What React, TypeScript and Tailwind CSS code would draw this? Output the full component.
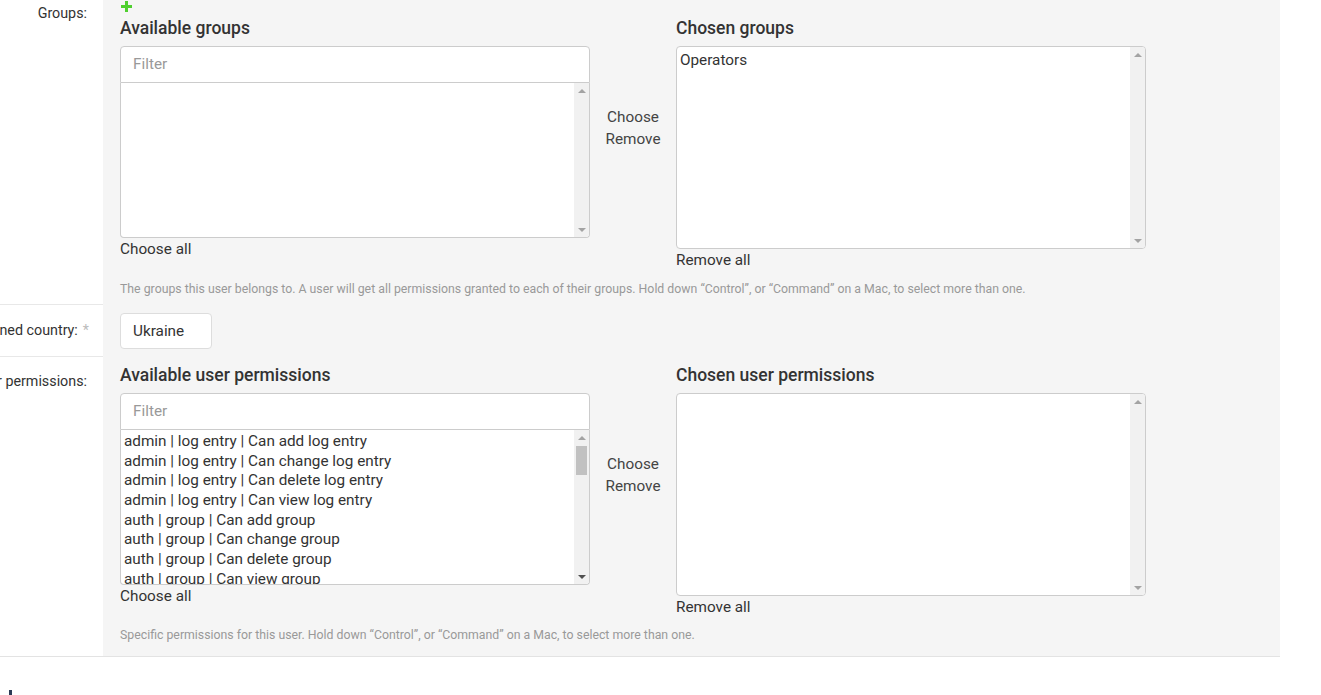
import React from "react";

function Up({ dark }: { dark?: boolean }) {
  return (
    <div className="flex h-[15px] w-full items-center justify-center">
      <div
        className={
          "h-0 w-0 border-x-[4px] border-b-[4px] border-x-transparent " +
          (dark ? "border-b-[#505050]" : "border-b-[#a3a3a3]")
        }
      />
    </div>
  );
}

function Down({ dark }: { dark?: boolean }) {
  return (
    <div className="flex h-[15px] w-full items-center justify-center">
      <div
        className={
          "h-0 w-0 border-x-[4px] border-t-[4px] border-x-transparent " +
          (dark ? "border-t-[#505050]" : "border-t-[#a3a3a3]")
        }
      />
    </div>
  );
}

function Scrollbar({ thumb }: { thumb?: boolean }) {
  return (
    <div className="flex w-[15px] shrink-0 flex-col bg-[#f1f1f1]">
      <Up />
      {thumb ? (
        <div className="ml-[2px] mt-[1px] h-[29px] w-[11px] bg-[#c1c1c1]" />
      ) : null}
      <div className="flex-1" />
      <Down dark={thumb} />
    </div>
  );
}

function Widget({
  available,
  chosen,
  items,
  chosenItems,
}: {
  available: string;
  chosen: string;
  items: string[];
  chosenItems: string[];
}) {
  return (
    <div className="flex">
      <div className="flex w-[470px] flex-col">
        <div className="h-[20px] whitespace-nowrap text-[17.5px] font-medium leading-[20px] text-[#333]">
          {available}
        </div>
        <div className="mt-[8px] flex h-[37px] items-center rounded-t-[4px] border border-[#ccc] bg-white pl-[12px] text-[15.3px] text-[#999]">
          Filter
        </div>
        <div className="flex h-[155px] overflow-hidden rounded-b-[4px] border-x border-b border-[#ccc] bg-white">
          <div className="flex-1 overflow-hidden pl-[3px] pt-[2px]">
            {items.map((t) => (
              <div
                key={t}
                className="h-[19.7px] whitespace-nowrap text-[15.3px] leading-[19.7px] text-[#333]"
              >
                {t}
              </div>
            ))}
          </div>
          <Scrollbar thumb={items.length > 0} />
        </div>
        <div className="h-[21px] pt-[1px] text-[15.3px] leading-[20px] text-[#333]">
          Choose all
        </div>
      </div>
      <div className="flex w-[86px] flex-col items-center pt-[88px] text-[15.3px] leading-[22px] text-[#444]">
        <div>Choose</div>
        <div>Remove</div>
      </div>
      <div className="flex w-[470px] flex-col">
        <div className="h-[20px] whitespace-nowrap text-[17.5px] font-medium leading-[20px] text-[#333]">
          {chosen}
        </div>
        <div className="mt-[8px] flex h-[203px] overflow-hidden rounded-[4px] border border-[#ccc] bg-white">
          <div className="flex-1 pl-[3px] pt-[3px]">
            {chosenItems.map((t) => (
              <div
                key={t}
                className="h-[20px] text-[15.3px] leading-[20px] text-[#333]"
              >
                {t}
              </div>
            ))}
          </div>
          <Scrollbar />
        </div>
        <div className="h-[20px] pt-[1px] text-[15.3px] leading-[20px] text-[#333]">
          Remove all
        </div>
      </div>
    </div>
  );
}

function Label({
  text,
  req,
  cls,
}: {
  text: string;
  req?: boolean;
  cls: string;
}) {
  return (
    <div
      className={
        "flex w-[103px] shrink-0 justify-end overflow-hidden border-b border-[#e8e8e8] bg-white " +
        cls
      }
    >
      <span className="whitespace-nowrap text-[14.3px] leading-[18px] text-[#333]">
        {text}
        {req ? <span className="ml-[5px] text-[#bbb]">*</span> : null}
      </span>
    </div>
  );
}

export default function App() {
  const perms = [
    "admin | log entry | Can add log entry",
    "admin | log entry | Can change log entry",
    "admin | log entry | Can delete log entry",
    "admin | log entry | Can view log entry",
    "auth | group | Can add group",
    "auth | group | Can change group",
    "auth | group | Can delete group",
    "auth | group | Can view group",
    "auth | permission | Can add permission",
  ];
  return (
    <div className="min-h-[695px] w-[1321px] bg-white font-[Roboto,sans-serif]">
      <div className="w-[1280px] border-b border-[#e3e3e3]">
        {/* Row 1: Groups */}
        <div className="flex">
          <Label text="Groups:" cls="pt-[4px] pr-[16px]" />
          <div className="flex-1 bg-[#f5f5f5] pb-[8px] pl-[17px]">
            <div className="h-[18px] pl-[1px] pt-[1px]">
              <svg width="11" height="11" viewBox="0 0 11 11">
                <rect x="4" y="0" width="3" height="11" fill="#4fcf2f" />
                <rect x="0" y="4" width="11" height="3" fill="#4fcf2f" />
              </svg>
            </div>
            <Widget
              available="Available groups"
              chosen="Chosen groups"
              items={[]}
              chosenItems={["Operators"]}
            />
            <div className="mt-[12px] h-[16px] whitespace-nowrap text-[12.3px] leading-[16px] text-[#999]">
              The groups this user belongs to. A user will get all permissions
              granted to each of their groups. Hold down “Control”, or
              “Command” on a Mac, to select more than one.
            </div>
          </div>
        </div>
        {/* Row 2: Assigned country */}
        <div className="flex">
          <Label text="Assigned country:" req cls="pt-[16px] pr-[14px]" />
          <div className="flex-1 bg-[#f5f5f5] pb-[8px] pl-[17px] pt-[8px]">
            <div className="flex h-[36px] w-[92px] items-center rounded-[4px] border border-[#ddd] bg-white pl-[12px] text-[15.3px] text-[#333]">
              Ukraine
            </div>
          </div>
        </div>
        {/* Row 3: User permissions */}
        <div className="flex">
          <div className="flex w-[103px] shrink-0 justify-end overflow-hidden bg-white pr-[16px] pt-[15px]">
            <span className="whitespace-nowrap text-[14.3px] leading-[18px] text-[#333]">
              User permissions:
            </span>
          </div>
          <div className="flex-1 bg-[#f5f5f5] pb-[13px] pl-[17px] pt-[8px]">
            <Widget
              available="Available user permissions"
              chosen="Chosen user permissions"
              items={perms}
              chosenItems={[]}
            />
            <div className="mt-[11px] h-[16px] whitespace-nowrap text-[12.3px] leading-[16px] text-[#999]">
              Specific permissions for this user. Hold down “Control”, or
              “Command” on a Mac, to select more than one.
            </div>
          </div>
        </div>
      </div>
      <div className="ml-[9px] mt-[33px] h-[5px] w-[3px] bg-[#2b3a55]" />
    </div>
  );
}
